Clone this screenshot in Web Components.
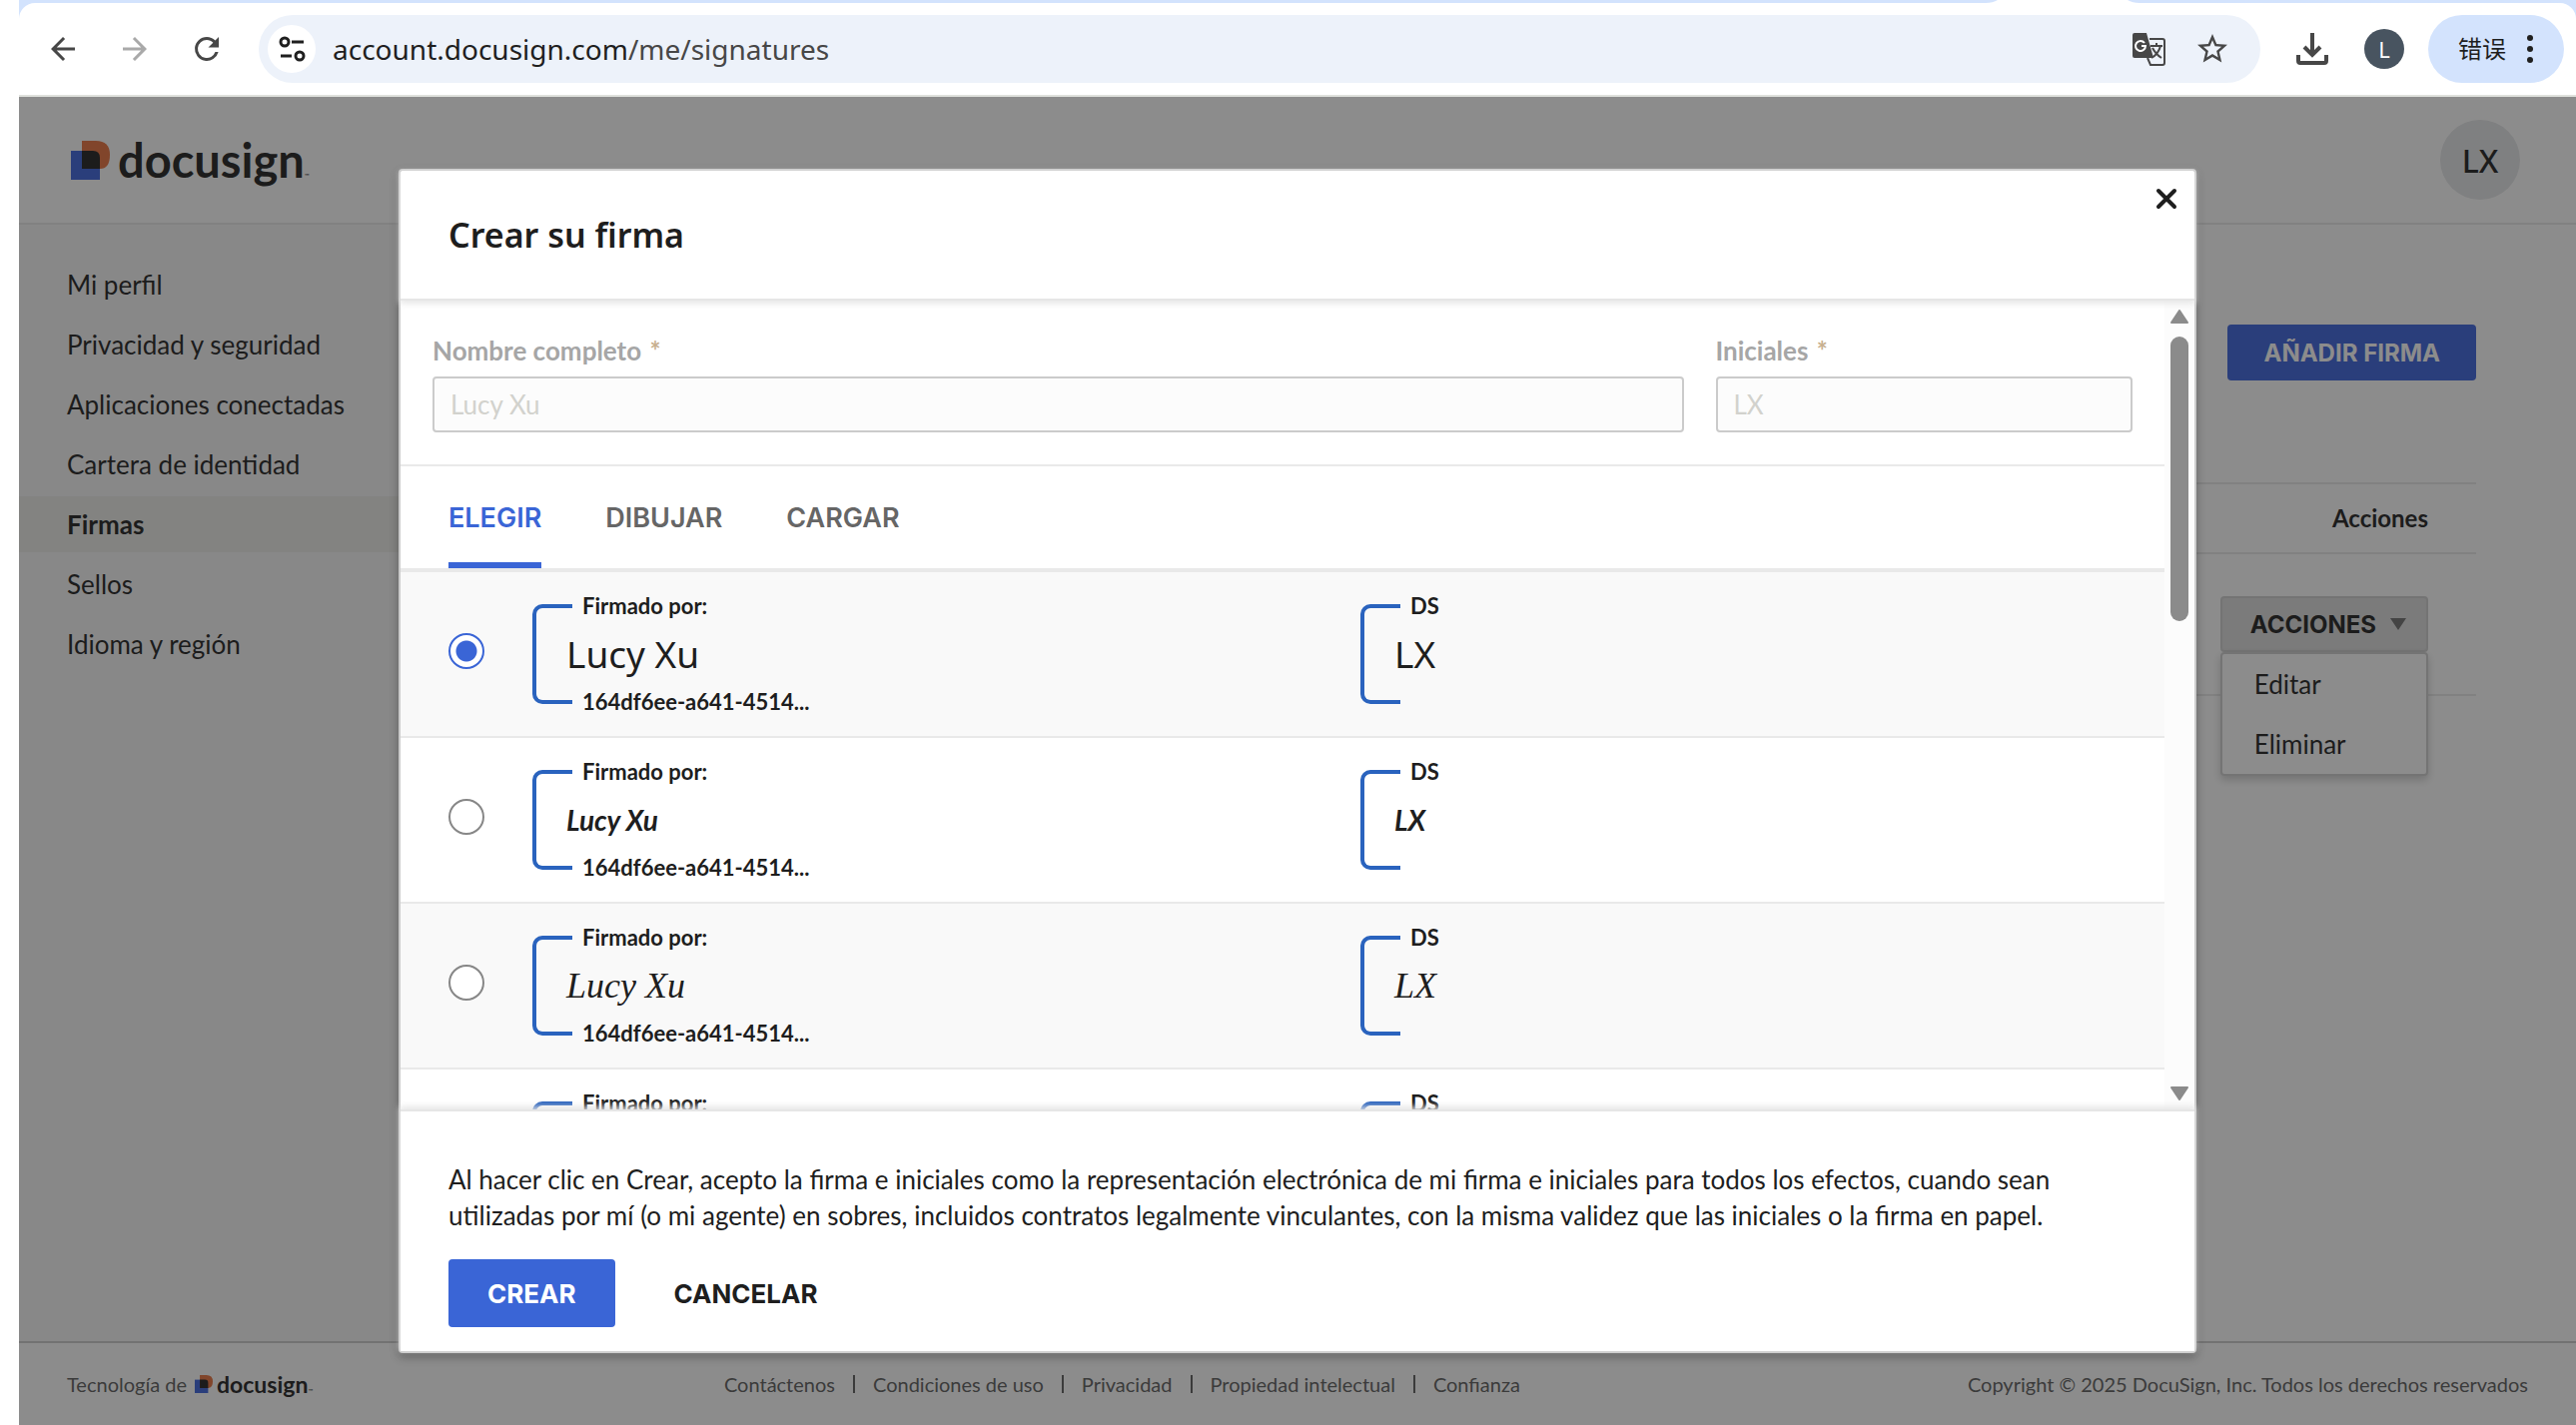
<!DOCTYPE html>
<html lang="es">
<head>
<meta charset="utf-8">
<title>Firmas</title>
<style>
html, body {
    height: 100%;
    margin: 0;
}

body {
    background: #fff;
    color: #1e1e1e;
    font: 26px/36px Lato, "Noto Sans", sans-serif;
}
</style>
</head>
<body>
<browser-window>
    <browser-toolbar slot="toolbar" host="account.docusign.com" path="/me/signatures" profile="L"></browser-toolbar>
    <account-page>
        <account-header slot="header" initials="LX"></account-header>
        <side-nav slot="nav">
            <nav-item>Mi perfil</nav-item>
            <nav-item>Privacidad y seguridad</nav-item>
            <nav-item>Aplicaciones conectadas</nav-item>
            <nav-item>Cartera de identidad</nav-item>
            <nav-item current>Firmas</nav-item>
            <nav-item>Sellos</nav-item>
            <nav-item>Idioma y región</nav-item>
        </side-nav>
        <signatures-table></signatures-table>
        <account-footer slot="footer"></account-footer>
    </account-page>
    <signature-dialog slot="dialog">
        <span slot="title">Crear su firma</span>
        <text-field slot="fields" label="Nombre completo" value="Lucy Xu"></text-field>
        <text-field slot="fields" label="Iniciales" value="LX"></text-field>
        <signature-option checked>
            <signature-stamp label="Firmado por:" code="164df6ee-a641-4514...">Lucy Xu</signature-stamp>
            <signature-stamp label="DS">LX</signature-stamp>
        </signature-option>
        <signature-option>
            <signature-stamp look="brush" label="Firmado por:" code="164df6ee-a641-4514...">Lucy Xu</signature-stamp>
            <signature-stamp look="brush" label="DS">LX</signature-stamp>
        </signature-option>
        <signature-option>
            <signature-stamp look="pen" label="Firmado por:" code="164df6ee-a641-4514...">Lucy Xu</signature-stamp>
            <signature-stamp look="pen" label="DS">LX</signature-stamp>
        </signature-option>
        <signature-option>
            <signature-stamp look="pen" label="Firmado por:"></signature-stamp>
            <signature-stamp look="pen" label="DS"></signature-stamp>
        </signature-option>
        <span slot="terms">Al hacer clic en Crear, acepto la firma e iniciales como la representación electrónica de mi firma e iniciales para todos los efectos, cuando sean utilizadas por mí (o mi agente) en sobres, incluidos contratos legalmente vinculantes, con la misma validez que las iniciales o la firma en papel.</span>
    </signature-dialog>
</browser-window>

<script>
// Attaches an open shadow root with the given markup.
class BaseElement extends HTMLElement {
    constructor() {
        super();
        this.attachShadow({ mode: 'open' });
    }

    connectedCallback() {
        this.shadowRoot.innerHTML = this.render();
        this.ready();
    }

    attr(name) {
        return this.getAttribute(name) || '';
    }

    ready() {}
}

class BrowserWindow extends BaseElement {
    render() {
        return `
<style>
:host {
    display: flex;
    flex-direction: column;
    height: 100%;
    box-sizing: border-box;
    padding-left: 19px;
}

.view {
    position: relative;
    flex: 1;
    min-height: 0;
    display: flex;
}

.overlay {
    position: absolute;
    inset: 0;
    display: flex;
    justify-content: center;
    padding: 72px 0;
    background: rgba(26, 26, 26, .5);
}
</style>
<slot name="toolbar"></slot>
<div class="view">
    <slot></slot>
    <div class="overlay"><slot name="dialog"></slot></div>
</div>`;
    }
}

class BrowserToolbar extends BaseElement {
    render() {
        return `
<style>
:host {
    display: block;
    background: #d3e3fd;
    font-family: "Noto Sans", "Noto Sans CJK SC", sans-serif;
}

.tabs {
    display: flex;
    justify-content: flex-end;
    height: 3px;
    padding-right: 437px;
}

.bar {
    display: flex;
    align-items: center;
    height: 92px;
    padding: 0 12px 0 26px;
    border-bottom: 2px solid #dfe1dc;
    border-radius: 16px 16px 0 0;
    background: #fff;
}

button {
    display: flex;
    padding: 0;
    border: 0;
    background: none;
    color: #474747;
    font: inherit;
}

svg {
    display: block;
    fill: currentColor;
}

.nav {
    display: flex;
    gap: 36px;
}

.nav button:disabled {
    color: #a9a9a9;
}

.address {
    flex: 1;
    display: flex;
    align-items: center;
    height: 68px;
    margin: 0 34px;
    padding: 0 30px 0 9px;
    border-radius: 34px;
    background: #edf2fa;
}

.site {
    padding: 6px;
    border-radius: 50%;
    background: #fff;
    color: #1f1f1f;
}

.url {
    flex: 1;
    margin-left: 17px;
    color: #474747;
    font-size: 28px;
    outline: 0;
}

.url b {
    color: #1f1f1f;
    font-weight: 400;
}

.tools {
    display: flex;
    gap: 28px;
}

.profile {
    align-items: center;
    justify-content: center;
    width: 40px;
    height: 40px;
    margin: 0 24px 0 34px;
    border-radius: 50%;
    background: #485460;
    color: #fff;
    font-size: 22px;
}

.menu {
    align-items: center;
    gap: 18px;
    height: 68px;
    padding: 0 28px 0 30px;
    border-radius: 34px;
    background: #d3e3fd;
    color: #1f1f1f;
    font-size: 24px;
}
</style>
<div class="tabs">
    <svg width="154" height="3" viewBox="0 0 154 3"><path fill="#fff" d="M0 3Q7 3 12 0H142Q147 3 154 3Z"/></svg>
</div>
<div class="bar">
    <div class="nav">
        <button aria-label="Atrás"><svg width="36" height="36" viewBox="0 0 24 24"><path d="M20 11H7.83l5.59-5.59L12 4l-8 8 8 8 1.41-1.41L7.83 13H20z"/></svg></button>
        <button aria-label="Adelante" disabled><svg width="36" height="36" viewBox="0 0 24 24"><path d="M12 4l-1.41 1.41L16.17 11H4v2h12.17l-5.58 5.59L12 20l8-8z"/></svg></button>
        <button aria-label="Recargar"><svg width="36" height="36" viewBox="0 0 24 24"><path d="M17.65 6.35A7.95 7.95 0 0 0 12 4a8 8 0 1 0 7.75 10h-2.09A6 6 0 1 1 12 6c1.66 0 3.14.69 4.22 1.78L13 11h7V4z"/></svg></button>
    </div>
    <div class="address">
        <button class="site" aria-label="Información del sitio"><svg width="36" height="36" viewBox="0 0 36 36"><g fill="none" stroke="currentColor" stroke-width="3"><circle cx="11" cy="11" r="4"/><path d="M18 11h12M7 25h11"/><circle cx="26" cy="25" r="4"/></g></svg></button>
        <div class="url" role="textbox" aria-label="Dirección" contenteditable="true" spellcheck="false"><b>${this.attr('host')}</b>${this.attr('path')}</div>
        <div class="tools">
            <button aria-label="Traducir"><svg width="36" height="36" viewBox="0 0 36 36">
                <path d="M4 2h12l7 25H4a2 2 0 0 1-2-2V4a2 2 0 0 1 2-2z"/>
                <path d="M19 8h13a2 2 0 0 1 2 2v22a2 2 0 0 1-2 2H20l-3-7" fill="none" stroke="currentColor" stroke-width="2"/>
                <path d="M14 12a5 5 0 1 0 1 3h-4" fill="none" stroke="#fff" stroke-width="2"/>
                <path d="M20 15h12M26 12v3M30 15q-2 8-9 12M22 17q3 6 9 10" fill="none" stroke="currentColor" stroke-width="2"/>
            </svg></button>
            <button aria-label="Añadir a marcadores"><svg width="36" height="36" viewBox="0 0 24 24"><path d="M22 9.24l-7.19-.62L12 2 9.19 8.63 2 9.24l5.46 4.73L5.82 21 12 17.27 18.18 21l-1.63-7.03zM12 15.4l-3.76 2.27 1-4.28-3.32-2.88 4.38-.38L12 6.1l1.71 4.04 4.38.38-3.32 2.88 1 4.28z"/></svg></button>
        </div>
    </div>
    <button aria-label="Descargas"><svg width="36" height="36" viewBox="0 0 36 36"><g fill="none" stroke="currentColor" stroke-width="4"><path d="M18 2v22M10 16l8 8 8-8M4 24v6q0 2 2 2h24q2 0 2-2v-6"/></g></svg></button>
    <button class="profile">${this.attr('profile')}</button>
    <button class="menu">错误<svg width="12" height="30" viewBox="0 0 12 30"><circle cx="6" cy="4" r="3"/><circle cx="6" cy="15" r="3"/><circle cx="6" cy="26" r="3"/></svg></button>
</div>`;
    }
}

class AccountPage extends BaseElement {
    render() {
        return `
<style>
:host {
    flex: 1;
    display: flex;
    flex-direction: column;
    background: #fff;
}

.columns {
    flex: 1;
    display: flex;
}

main {
    flex: 1;
    padding: 100px 100px 0 48px;
}
</style>
<slot name="header"></slot>
<div class="columns">
    <slot name="nav"></slot>
    <main><slot></slot></main>
</div>
<slot name="footer"></slot>`;
    }
}

class DocusignLogo extends BaseElement {
    render() {
        return `
<style>
:host {
    display: inline-flex;
    align-items: center;
    gap: 8px;
    font-size: 47px;
    font-weight: 700;
    line-height: 1;
    --mark: 39px;
}

:host([small]) {
    gap: 4px;
    font-size: 23px;
    --mark: 18px;
}

svg {
    width: var(--mark);
    height: var(--mark);
}

small {
    font-size: 6px;
    font-weight: 400;
}
</style>
<svg viewBox="0 0 39 39">
    <path fill="#3a62dd" d="M0 10h29v29H0z"/>
    <path fill="#e8703c" d="M11 0h14q14 0 14 14t-10 14H11z"/>
    <path fill="#1e1e1e" d="M11 10h11q7 0 7 7v11H11z"/>
</svg>
<span>docusign<small>™</small></span>`;
    }
}

class AccountHeader extends BaseElement {
    render() {
        return `
<style>
:host {
    display: flex;
    align-items: center;
    justify-content: space-between;
    height: 126px;
    padding: 0 56px 0 52px;
    border-bottom: 2px solid #e9e9e9;
}

button {
    width: 80px;
    height: 80px;
    padding: 0;
    border: 0;
    border-radius: 50%;
    background: #e5e6e8;
    color: inherit;
    font: 500 32px "Noto Sans", sans-serif;
}
</style>
<docusign-logo></docusign-logo>
<button>${this.attr('initials')}</button>`;
    }
}

class SideNav extends BaseElement {
    render() {
        return `
<style>
:host {
    display: block;
    width: 380px;
    padding-top: 32px;
    background: #f6f6f6;
}

nav {
    display: flex;
    flex-direction: column;
    gap: 4px;
}
</style>
<nav><slot></slot></nav>`;
    }
}

class NavItem extends BaseElement {
    render() {
        return `
<style>
:host {
    display: block;
}

a {
    display: block;
    padding-left: 48px;
    color: inherit;
    line-height: 56px;
    text-decoration: none;
}

:host([current]) a {
    background: #ecece9;
    font-weight: 700;
}
</style>
<a href="#"><slot></slot></a>`;
    }
}

class SignaturesTable extends BaseElement {
    render() {
        return `
<style>
:host {
    display: flex;
    flex-direction: column;
    align-items: flex-end;
    gap: 102px;
}

button {
    display: flex;
    align-items: center;
    gap: 14px;
    height: 56px;
    padding: 0 36px;
    border: 0;
    border-radius: 4px;
    font: 700 24px Inter, sans-serif;
}

.add {
    background: #3a62dd;
    color: #fff;
}

table {
    width: 100%;
    border-collapse: collapse;
    border-top: 2px solid #e9e9e9;
}

th {
    height: 68px;
    padding: 0 48px 0 0;
    border-bottom: 2px solid #e9e9e9;
    font-size: 24px;
    text-align: right;
}

td {
    padding: 42px 48px 42px 0;
    border-bottom: 2px solid #e9e9e9;
}

.actions {
    position: relative;
    width: max-content;
    margin-left: auto;
}

.actions button {
    padding: 0 20px 0 28px;
    border: 2px solid #cfcfcf;
    background: #dcdcdc;
    color: #1e1e1e;
}

ul {
    position: absolute;
    top: 56px;
    left: 0;
    right: 0;
    margin: 0;
    padding: 0;
    border: 2px solid #cfcfcf;
    border-radius: 4px;
    background: #fff;
    box-shadow: 0 4px 8px rgba(0, 0, 0, .2);
    list-style: none;
}

a {
    display: block;
    padding-left: 32px;
    color: inherit;
    line-height: 60px;
    text-decoration: none;
}
</style>
<button class="add">AÑADIR FIRMA</button>
<table>
    <thead><tr><th>Acciones</th></tr></thead>
    <tbody><tr><td>
        <div class="actions">
            <button aria-haspopup="true" aria-expanded="true">ACCIONES<svg width="16" height="12" viewBox="0 0 16 12"><path fill="#6e6e6e" d="M0 0h16L8 12z"/></svg></button>
            <ul>
                <li><a href="#">Editar</a></li>
                <li><a href="#">Eliminar</a></li>
            </ul>
        </div>
    </td></tr></tbody>
</table>`;
    }
}

class AccountFooter extends BaseElement {
    render() {
        return `
<style>
:host {
    display: flex;
    align-items: center;
    justify-content: space-between;
    height: 82px;
    padding: 0 48px;
    border-top: 2px solid #cacaca;
    color: #5c5c5c;
    font-size: 20px;
}

div {
    display: flex;
    align-items: center;
    gap: 8px;
}

docusign-logo {
    color: #1e1e1e;
}

nav {
    display: flex;
    align-items: center;
    padding-right: 36px;
}

a {
    color: inherit;
    line-height: 18px;
    text-decoration: none;
}

a + a {
    margin-left: 18px;
    padding-left: 18px;
    border-left: 2px solid #5c5c5c;
}
</style>
<div>Tecnología de <docusign-logo small></docusign-logo></div>
<nav>
    <a href="#">Contáctenos</a>
    <a href="#">Condiciones de uso</a>
    <a href="#">Privacidad</a>
    <a href="#">Propiedad intelectual</a>
    <a href="#">Confianza</a>
</nav>
<span>Copyright © 2025 DocuSign, Inc. Todos los derechos reservados</span>`;
    }
}

class TextField extends BaseElement {
    render() {
        return `
<style>
:host {
    display: flex;
    flex-direction: column;
    gap: 10px;
}

label {
    color: #a6a6a6;
    font-weight: 700;
    line-height: 32px;
}

i {
    margin-left: 2px;
    color: #c8b08f;
    font-style: normal;
}

input {
    box-sizing: border-box;
    width: 100%;
    height: 56px;
    padding: 0 16px;
    border: 2px solid #cbcbcb;
    border-radius: 4px;
    background: #fcfcfc;
    color: #d2d2cd;
    font: inherit;
}
</style>
<label for="field">${this.attr('label')} <i>*</i></label>
<input id="field" type="text" value="${this.attr('value')}" disabled>`;
    }
}

class SignatureStamp extends BaseElement {
    render() {
        return `
<style>
:host {
    display: grid;
    grid-template-columns: 34px 16px 1fr;
    grid-template-rows: 26px 70px 26px;
    align-items: center;
    font-size: 22px;
    font-weight: 700;
    line-height: 26px;
}

.bracket {
    grid-area: 1 / 1 / 4 / 3;
    align-self: stretch;
    width: 36px;
    margin: 11px 0;
    border: 4px solid #2a63be;
    border-right: 0;
    border-radius: 10px 0 0 10px;
}

.label {
    grid-area: 1 / 3;
}

.name {
    grid-area: 2 / 2 / 3 / 4;
    font: 400 37px/48px "Noto Sans", sans-serif;
}

:host([look="brush"]) .name {
    font: italic 700 28px/48px Lato, cursive;
}

:host([look="pen"]) .name {
    font: italic 36px/48px "Liberation Serif", cursive;
}

.code {
    grid-area: 3 / 3;
}
</style>
<div class="bracket"></div>
<div class="label">${this.attr('label')}</div>
<div class="name"><slot></slot></div>
<div class="code">${this.attr('code')}</div>`;
    }
}

class SignatureOption extends BaseElement {
    render() {
        return `
<style>
:host {
    display: block;
    border-bottom: 2px solid #e9e9e9;
}

:host(:nth-of-type(odd)) {
    background: #f9f9f9;
}

label {
    display: flex;
    align-items: center;
    gap: 48px;
    padding: 21px 0 21px 48px;
}

input {
    appearance: none;
    box-sizing: border-box;
    width: 36px;
    height: 36px;
    margin: 0 0 6px;
    border: 2px solid #878787;
    border-radius: 50%;
    background: #fff;
}

input:checked {
    border-color: #3a65d6;
    background: radial-gradient(circle, #3a65d6 0 10px, #fff 11px);
}

.stamps {
    flex: 1;
    display: grid;
    grid-template-columns: 1fr 1fr;
    gap: 24px;
}
</style>
<label>
    <input type="radio" name="style">
    <span class="stamps"><slot></slot></span>
</label>`;
    }

    ready() {
        this.input = this.shadowRoot.querySelector('input');
        this.input.checked = this.hasAttribute('checked');
        this.input.addEventListener('change', () => this.select());
    }

    // Radios in separate shadow roots do not form a group on their own.
    select() {
        this.parentElement.querySelectorAll('signature-option').forEach(option => {
            option.input.checked = option === this;
        });
    }
}

class SignatureDialog extends BaseElement {
    render() {
        return `
<style>
:host {
    flex: 0 1 1800px;
    box-sizing: border-box;
    display: flex;
    flex-direction: column;
    border: 2px solid #cbcbcb;
    border-radius: 4px;
    background: #fff;
    box-shadow: 0 4px 10px rgba(0, 0, 0, .3);
}

header {
    position: relative;
    z-index: 1;
    display: flex;
    align-items: center;
    justify-content: space-between;
    height: 128px;
    padding: 0 16px 0 48px;
    border-bottom: 2px solid #e6e6e6;
    box-shadow: 0 2px 6px 1px rgba(228, 228, 228, .9);
}

h1 {
    margin: 0;
    font: 600 34px/48px "Noto Sans", sans-serif;
}

button {
    height: 68px;
    padding: 0 39px;
    border: 0;
    border-radius: 4px;
    background: none;
    color: inherit;
    font: 700 26px Inter, sans-serif;
}

.close {
    align-self: flex-start;
    height: 24px;
    margin-top: 16px;
    padding: 0;
}

.close svg {
    display: block;
}

.body {
    flex: 1;
    min-height: 0;
    display: flex;
    overflow: hidden;
}

.content {
    flex: 1;
}

.fields {
    display: grid;
    grid-template-columns: 3fr 1fr;
    gap: 32px;
    padding: 34px 32px 32px;
    border-bottom: 2px solid #e9e9e9;
}

.tabs {
    display: flex;
    gap: 64px;
    padding-left: 48px;
    border-bottom: 4px solid #e9e9e9;
}

.tabs button {
    height: 102px;
    padding: 6px 0 0;
    border-bottom: 6px solid transparent;
    border-radius: 0;
    color: #666;
    font-size: 27px;
    font-weight: 600;
}

.tabs button[aria-selected="true"] {
    border-color: #3a65d6;
    color: #3a65d6;
}

.scrollbar {
    display: flex;
    flex-direction: column;
    align-items: center;
    width: 30px;
    padding: 9px 0;
    box-sizing: border-box;
    background: #fcfcfc;
}

.thumb {
    width: 18px;
    height: 36%;
    margin: 13px 0 auto;
    border-radius: 9px;
    background: #8b8b8b;
}

footer {
    position: relative;
    z-index: 1;
    padding: 50px 48px 24px;
    border-top: 2px solid #e6e6e6;
    background: #fff;
    box-shadow: 0 -2px 6px 1px rgba(228, 228, 228, .9);
}

p {
    max-width: 1640px;
    margin: 0 0 26px;
}

.buttons {
    display: flex;
    gap: 20px;
}

.primary {
    background: #3a65d6;
    color: #fff;
}
</style>
<header>
    <h1><slot name="title"></slot></h1>
    <button class="close" aria-label="Cerrar"><svg width="24" height="24" viewBox="0 0 24 24"><path d="M4 4l16 16M20 4L4 20" stroke="#1e1e1e" stroke-width="4" stroke-linecap="round"/></svg></button>
</header>
<div class="body">
    <div class="content">
        <div class="fields"><slot name="fields"></slot></div>
        <div class="tabs" role="tablist">
            <button role="tab" aria-selected="true">ELEGIR</button>
            <button role="tab" aria-selected="false">DIBUJAR</button>
            <button role="tab" aria-selected="false">CARGAR</button>
        </div>
        <slot></slot>
    </div>
    <div class="scrollbar">
        <svg width="18" height="14" viewBox="0 0 18 14"><path fill="#8b8b8b" stroke="#8b8b8b" stroke-width="2" stroke-linejoin="round" d="M9 1l8 12H1z"/></svg>
        <div class="thumb"></div>
        <svg width="18" height="14" viewBox="0 0 18 14"><path fill="#8b8b8b" stroke="#8b8b8b" stroke-width="2" stroke-linejoin="round" d="M9 13L1 1h16z"/></svg>
    </div>
</div>
<footer>
    <p><slot name="terms"></slot></p>
    <div class="buttons">
        <button class="primary">CREAR</button>
        <button>CANCELAR</button>
    </div>
</footer>`;
    }
}

customElements.define('browser-window', BrowserWindow);
customElements.define('browser-toolbar', BrowserToolbar);
customElements.define('account-page', AccountPage);
customElements.define('docusign-logo', DocusignLogo);
customElements.define('account-header', AccountHeader);
customElements.define('side-nav', SideNav);
customElements.define('nav-item', NavItem);
customElements.define('signatures-table', SignaturesTable);
customElements.define('account-footer', AccountFooter);
customElements.define('text-field', TextField);
customElements.define('signature-stamp', SignatureStamp);
customElements.define('signature-option', SignatureOption);
customElements.define('signature-dialog', SignatureDialog);
</script>
</body>
</html>
